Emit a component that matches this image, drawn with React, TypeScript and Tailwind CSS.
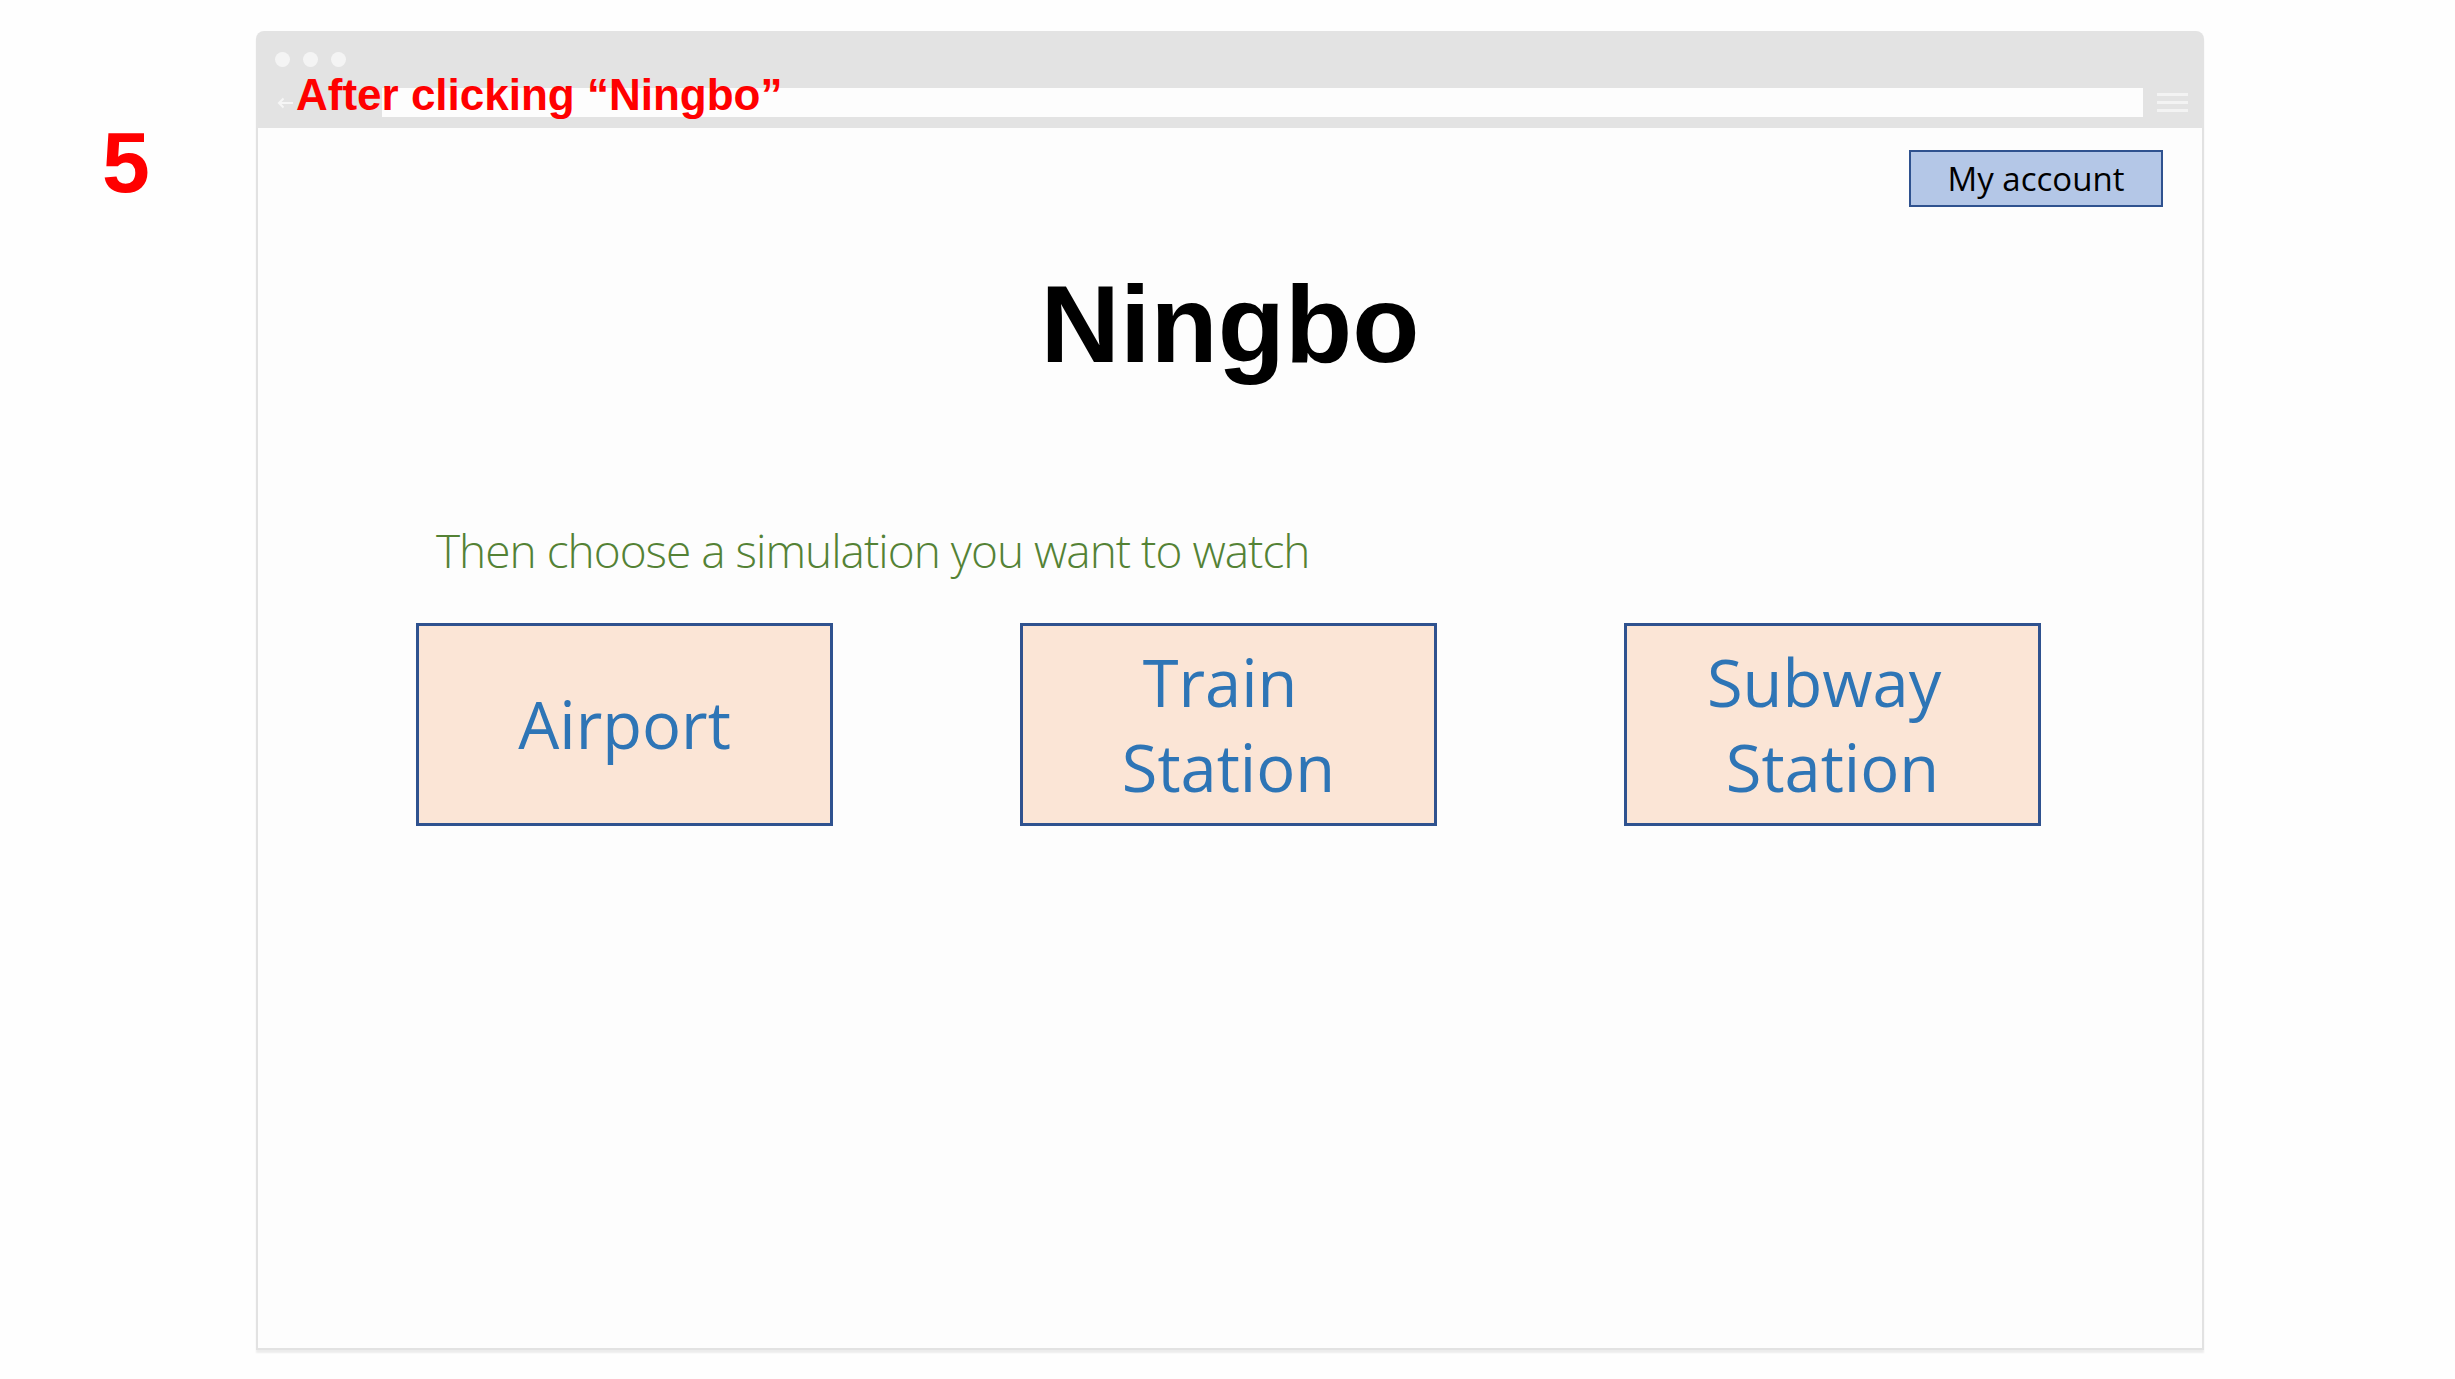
import React from "react";

const boxes = [
  { id: "airport", lines: ["Airport"] },
  { id: "train", lines: ["Train\u00a0", "Station"] },
  { id: "subway", lines: ["Subway\u00a0", "Station"] },
];

const SimBox = ({ lines }: { lines: string[] }) => (
  <div className="w-[417px] h-[203px] flex items-center justify-center border-[3px] border-solid border-[#2f528f] bg-[#fbe5d6]">
    <div className="text-center text-[65px] leading-[85px] text-[#2e75b6] font-['Open_Sans',sans-serif]">
      {lines.map((l) => (
        <div key={l} className="whitespace-pre">
          {l}
        </div>
      ))}
    </div>
  </div>
);

const TitleBar = () => (
  <div className="relative h-[97px] shrink-0 rounded-t-[8px] bg-[#e3e3e3] pt-[21px]">
    {/* window dots */}
    <div className="flex gap-[13px] pl-[19px]">
      <span className="w-[15px] h-[15px] rounded-full bg-[#f4f4f4]" />
      <span className="w-[15px] h-[15px] rounded-full bg-[#f4f4f4]" />
      <span className="w-[15px] h-[15px] rounded-full bg-[#f4f4f4]" />
    </div>
    <div className="flex items-center h-[29px] mt-[21px] pl-[21px]">
      <svg width="17" height="12" viewBox="0 0 17 12" className="shrink-0">
        <path d="M16 6H2M6.5 1.5L2 6l4.5 4.5" stroke="#f6f6f6" strokeWidth="2" fill="none" />
      </svg>
      <div className="ml-[88px] w-[1761px] h-[29px] bg-[#fdfdfd]" />
      <div className="ml-[14px] flex flex-col gap-[5px] w-[31px]">
        <span className="h-[3px] bg-[#f3f3f3]" />
        <span className="h-[3px] bg-[#f3f3f3]" />
        <span className="h-[3px] bg-[#f3f3f3]" />
      </div>
    </div>
    {/* annotation overlay */}
    <div className="absolute left-[40px] top-[42px] text-[44px] leading-none font-bold text-[#ff0000] font-['Liberation_Sans',Arial,sans-serif] whitespace-nowrap">
      After clicking “Ningbo”
    </div>
  </div>
);

export default function App() {
  return (
    <div className="min-h-[1379px] w-full bg-[#fefefe] flex pt-[31px]">
      <div className="w-[256px] shrink-0 pl-[102px] pt-[88px]">
        <div className="text-[86px] leading-none font-bold text-[#ff0000] font-['Liberation_Sans',Arial,sans-serif]">
          5
        </div>
      </div>

      <div className="w-[1948px] h-[1319px] flex flex-col shadow-[0_3px_2px_rgba(0,0,0,0.07)] rounded-t-[8px]">
        <TitleBar />

        <div className="flex-1 flex flex-col bg-[#fdfdfd] border-x-2 border-b-2 border-solid border-[#e2e2e2]">
          <div className="flex justify-end pt-[22px] pr-[39px]">
            <button className="w-[254px] h-[57px] flex items-center justify-center border-2 border-solid border-[#2f528f] bg-[#b4c7e7] text-[33px] leading-none text-black font-['Open_Sans',sans-serif]">
              My account
            </button>
          </div>

          <h1 className="mt-[62px] text-center text-[110px] leading-none font-bold text-black font-['Liberation_Sans',Arial,sans-serif]">
            Ningbo
          </h1>

          <p className="mt-[148px] pl-[178px] text-[46px] leading-none font-light tracking-[-1px] text-[#548235] font-['Open_Sans',sans-serif]">
            Then choose a simulation you want to watch
          </p>

          <div className="mt-[50px] pl-[158px] flex gap-[187px]">
            {boxes.map((b) => (
              <SimBox key={b.id} lines={b.lines} />
            ))}
          </div>
        </div>
      </div>
    </div>
  );
}
